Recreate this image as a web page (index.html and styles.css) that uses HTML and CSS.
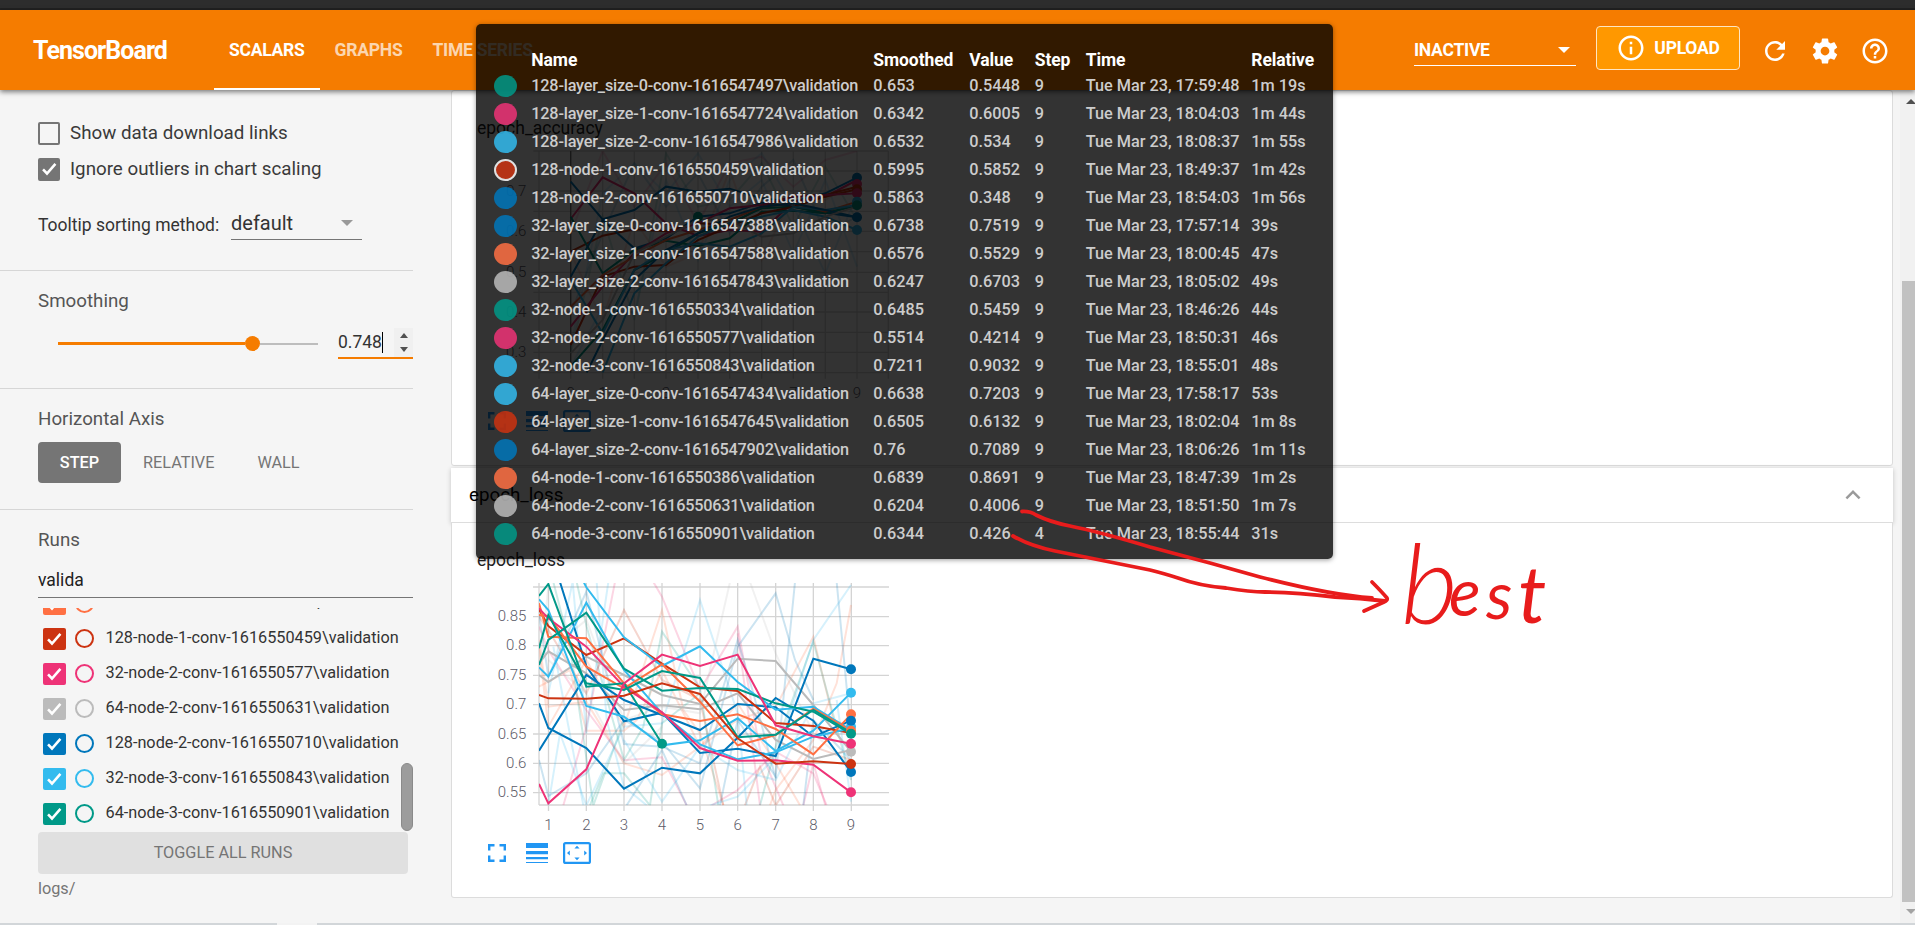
FILE: index.html
```html
<!DOCTYPE html>
<html lang="en">
<head>
<meta charset="utf-8">
<title>TensorBoard</title>
<link rel="stylesheet" href="styles.css">
</head>
<body>
<svg class="defs" width="0" height="0">
  <defs>
    <symbol id="check" viewBox="0 0 24 24"><path d="M5.5 12.5l4.3 4.4L19 6.5" fill="none" stroke="#fff" stroke-width="2.8"/></symbol>
    <symbol id="full" viewBox="0 0 18 18"><path d="M1.2 6.5V1.2H6.5M11.5 1.2h5.3v5.3M16.8 11.5v5.3h-5.3M6.5 16.8H1.2v-5.3" fill="none" stroke="currentColor" stroke-width="2.4"/></symbol>
    <symbol id="lines" viewBox="0 0 22 20"><path d="M0 0h22v5H0zM0 8h22v3.3H0zM0 14h22v2.2H0zM0 19h22v1H0z" fill="currentColor"/></symbol>
    <symbol id="fit" viewBox="0 0 28 22"><rect x="1.1" y="1.1" width="25.8" height="19.8" rx="1.5" fill="none" stroke="currentColor" stroke-width="2.2"/><path d="M14 3.8l2.6 2.8h-5.2zM14 18.2l2.6-2.8h-5.2zM4 11l2.8-2.6v5.2zM24 11l-2.8-2.6v5.2z" fill="currentColor"/></symbol>
  </defs>
</svg>
<div class="app">
  <div class="window-edge"></div>
  <header class="toolbar">
    <h1 class="brand">TensorBoard</h1>
    <nav class="tabs">
      <span class="tab tab-active">SCALARS</span>
      <span class="tab">GRAPHS</span>
      <span class="tab tab-time">TIME SERIES</span>
    </nav>
    <div class="inactive"><span>INACTIVE</span><i class="caret caret-white"></i></div>
    <div class="upload">
      <svg width="30" height="30" viewBox="0 0 24 24" fill="#fff"><path d="M11 17h2v-6h-2v6zm1-15C6.48 2 2 6.48 2 12s4.480 10 10 10 10-4.480 10-10S17.520 2 12 2zm0 18c-4.410 0-8-3.590-8-8s3.590-8 8-8 8 3.590 8 8-3.590 8-8 8zM11 9h2V7h-2v2z"/></svg>
      <span>UPLOAD</span>
    </div>
    <div class="actions">
      <svg width="30" height="30" viewBox="0 0 24 24" fill="#fff"><path d="M17.650 6.350C16.200 4.900 14.210 4 12 4c-4.420 0-7.990 3.580-7.990 8s3.570 8 7.990 8c3.730 0 6.840-2.550 7.730-6h-2.080c-.82 2.330-3.040 4-5.650 4-3.310 0-6-2.690-6-6s2.690-6 6-6c1.660 0 3.140.69 4.220 1.780L13 11h7V4l-2.350 2.350z"/></svg>
      <svg width="30" height="30" viewBox="0 0 24 24" fill="#fff"><path d="M19.430 12.980c.04-.32.07-.64.07-.98s-.03-.66-.07-.98l2.110-1.650c.19-.15.24-.42.12-.64l-2-3.460c-.12-.22-.39-.3-.61-.22l-2.490 1c-.52-.4-1.080-.73-1.690-.98l-.38-2.650C14.460 2.180 14.250 2 14 2h-4c-.25 0-.46.18-.49.42l-.38 2.650c-.61.25-1.170.59-1.690.98l-2.490-1c-.23-.09-.49 0-.61.22l-2 3.460c-.13.22-.07.49.12.64l2.110 1.650c-.04.32-.07.65-.07.98s.03.66.07.98l-2.110 1.650c-.19.15-.24.42-.12.64l2 3.460c.12.22.39.3.61.22l2.490-1c.52.4 1.080.73 1.690.98l.38 2.650c.03.24.24.42.49.42h4c.25 0 .46-.18.49-.42l.38-2.650c.61-.25 1.170-.59 1.690-.98l2.490 1c.23.09.49 0 .61-.22l2-3.460c.12-.22.07-.49-.12-.64l-2.110-1.650zM12 15.500c-1.930 0-3.500-1.570-3.500-3.500s1.570-3.500 3.500-3.500 3.500 1.570 3.500 3.500-1.570 3.500-3.500 3.500z"/></svg>
      <svg width="30" height="30" viewBox="0 0 24 24" fill="#fff"><path d="M11 18h2v-2h-2v2zm1-16C6.480 2 2 6.480 2 12s4.480 10 10 10 10-4.480 10-10S17.520 2 12 2zm0 18c-4.410 0-8-3.590-8-8s3.590-8 8-8 8 3.590 8 8-3.590 8-8 8zm0-14c-2.210 0-4 1.790-4 4h2c0-1.100.9-2 2-2s2 .9 2 2c0 2-3 1.750-3 5h2c0-2.250 3-2.500 3-5 0-2.210-1.790-4-4-4z"/></svg>
    </div>
  </header>

  <div class="content">
    <aside class="sidebar">
      <section class="group group-options">
        <label class="option"><i class="box"></i><span>Show data download links</span></label>
        <label class="option"><i class="box box-on"><svg width="22" height="22"><use href="#check"/></svg></i><span>Ignore outliers in chart scaling</span></label>
        <div class="sorting"><span class="sorting-label">Tooltip sorting method:</span><span class="select"><span>default</span><i class="caret"></i></span></div>
      </section>
      <section class="group group-smoothing">
        <h3 class="heading">Smoothing</h3>
        <div class="smoothing">
          <div class="slider"><i class="slider-fill"></i><i class="knob"></i><i class="slider-rest"></i></div>
          <div class="number"><span>0.748</span><i class="cursor"></i><span class="spin"><i class="up"></i><i class="down"></i></span></div>
        </div>
      </section>
      <section class="group group-axis">
        <h3 class="heading">Horizontal Axis</h3>
        <div class="axis"><span class="axis-on">STEP</span><span>RELATIVE</span><span>WALL</span></div>
      </section>
      <section class="group-runs">
        <h3 class="heading">Runs</h3>
        <div class="filter">valida</div>
        <div class="runs">
          <div class="run-list">
            <div class="run orange"><i><svg width="22" height="22"><use href="#check"/></svg></i><b></b><span>64-node-1-conv-1616550386\validation</span></div>
            <div class="run red"><i><svg width="22" height="22"><use href="#check"/></svg></i><b></b><span>128-node-1-conv-1616550459\validation</span></div>
            <div class="run pink"><i><svg width="22" height="22"><use href="#check"/></svg></i><b></b><span>32-node-2-conv-1616550577\validation</span></div>
            <div class="run grey"><i><svg width="22" height="22"><use href="#check"/></svg></i><b></b><span>64-node-2-conv-1616550631\validation</span></div>
            <div class="run blue"><i><svg width="22" height="22"><use href="#check"/></svg></i><b></b><span>128-node-2-conv-1616550710\validation</span></div>
            <div class="run cyan"><i><svg width="22" height="22"><use href="#check"/></svg></i><b></b><span>32-node-3-conv-1616550843\validation</span></div>
            <div class="run teal"><i><svg width="22" height="22"><use href="#check"/></svg></i><b></b><span>64-node-3-conv-1616550901\validation</span></div>
          </div>
          <i class="thumb"></i>
        </div>
        <div class="toggle">TOGGLE ALL RUNS</div>
        <div class="logdir">logs/</div>
      </section>
    </aside>

    <main class="panes">
      <section class="pane pane-accuracy">
        <h2 class="chart-title">epoch_accuracy</h2>
        <svg class="chart" width="440" height="255" viewBox="0 390 1320 765">
          <clipPath id="c1"><rect x="207" y="393" width="1050" height="665"/></clipPath>
          <path class="grid" d="M207 393V1076M302 393V1076M398 393V1076M493 393V1076M588 393V1076M684 393V1076M779 393V1076M875 393V1076M970 393V1076M1066 393V1076M1161 393V1076M1255 393V1076M190 393H1255M190 453H1255M190 513H1255M190 574H1255M190 634H1255M190 695H1255M190 757H1255M190 817H1255M190 876H1255M190 937H1255M190 997H1255M190 1058H1255"/>
          <path d="M302 393V1058" stroke="#777" stroke-width="4"/>
          <g class="faint" clip-path="url(#c1)">
            <polyline class="s-pink" points="302,640 398,393 493,560 588,430 684,610 779,430 875,410 970,500 1066,420 1161,393"/>
            <polyline class="s-cyan" points="302,980 398,520 493,430 588,520 684,400 779,560 875,480 970,700 1066,480 1161,740"/>
            <polyline class="s-blue" points="302,880 398,640 493,430 588,560 684,460 779,640 875,500 970,420 1066,640 1161,590"/>
            <polyline class="s-teal" points="302,1000 398,590 493,900 588,400 684,560 779,540 875,430 970,620 1066,440 1161,600"/>
            <polyline class="s-orange" points="302,700 398,900 493,600 588,740 684,700 779,450 875,720 970,520 1066,540 1161,480"/>
            <polyline class="s-cyan" points="302,1040 398,860 493,880 588,480 684,720 779,480 875,400 970,560 1066,760 1161,520"/>
          </g>
          <g class="lines" clip-path="url(#c1)">
            <polyline class="s-blue" points="302,485 398,598 493,570 588,500 684,515 779,506 875,535 970,545 1066,520 1161,473"/>
            <polyline class="s-pink" points="302,597 398,472 493,520 588,610 684,648 779,630 875,635 970,545 1066,530 1161,480"/>
            <polyline class="s-red" points="302,695 398,647 493,628 588,634 684,610 779,615 875,560 970,528 1066,525 1161,500"/>
            <polyline class="s-teal" points="302,590 398,760 493,690 588,662 684,678 779,655 875,575 970,572 1066,580 1161,556"/>
            <polyline class="s-blue" points="302,770 398,600 493,685 588,655 684,590 779,580 875,548 970,560 1066,578 1161,592"/>
            <polyline class="s-teal" points="302,1040 398,930 493,750 588,700 684,640 779,610 875,565 970,560 1066,580 1161,556"/>
            <polyline class="s-red" points="302,975 398,770 493,740 588,735 684,660 779,620 875,580 970,560 1066,530 1161,508"/>
            <polyline class="s-pink" points="302,920 398,800 493,700 588,640 684,610 779,565 875,555 970,530 1066,525 1161,520"/>
            <polyline class="s-orange" points="302,860 398,765 493,710 588,660 684,630 779,600 875,560 970,550 1066,575 1161,545"/>
            <polyline class="s-cyan" points="302,780 398,940 493,750 588,690 684,670 779,680 875,640 970,560 1066,570 1161,555"/>
            <polyline class="s-blue" points="350,1058 398,960 493,780 588,690 684,640 779,590 875,560 970,550 1066,570 1161,592"/>
            <polyline class="s-cyan" points="398,1058 493,820 588,730 684,650 779,610 875,590 970,570 1066,590 1161,630"/>
            <polyline class="s-grey" points="302,1000 398,900 493,700 588,650 684,600 779,600 875,650 970,640 1066,590 1161,560"/>
          </g>
          <g><circle class="d-blue" cx="1161" cy="473" r="15"/><circle class="d-pink" cx="1161" cy="492" r="15"/><circle class="d-red" cx="1161" cy="508" r="15"/><circle class="d-pink" cx="1161" cy="520" r="15"/><circle class="d-cyan" cx="1161" cy="545" r="15"/><circle class="d-teal" cx="1161" cy="556" r="15"/><circle class="d-blue" cx="1161" cy="592" r="15"/><circle class="d-cyan" cx="1161" cy="630" r="15"/><circle class="d-teal" cx="684" cy="590" r="15"/></g>
          <g class="ticks-y"><text x="169" y="528">0.7</text><text x="169" y="649">0.6</text><text x="169" y="772">0.5</text><text x="169" y="891">0.4</text><text x="169" y="1012">0.3</text></g>
          <g class="ticks-x"><text x="302" y="1134">0</text><text x="398" y="1134">1</text><text x="493" y="1134">2</text><text x="588" y="1134">3</text><text x="684" y="1134">4</text><text x="779" y="1134">5</text><text x="875" y="1134">6</text><text x="970" y="1134">7</text><text x="1066" y="1134">8</text><text x="1161" y="1134">9</text></g>
        </svg>
        <div class="chart-tools"><svg width="18" height="18"><use href="#full"/></svg><svg width="22" height="20"><use href="#lines"/></svg><svg width="28" height="22"><use href="#fit"/></svg></div>
      </section>

      <header class="pane-header"><span>epoch_loss</span><svg width="30" height="30" viewBox="0 0 24 24" fill="#9a9a9a"><path d="M12 8l-6 6 1.410 1.410L12 10.830l4.590 4.580L18 14z"/></svg></header>
      <section class="pane pane-loss">
        <h2 class="chart-title">epoch_loss</h2>
        <svg class="chart" width="440" height="255" viewBox="0 66 1320 765">
          <clipPath id="c2"><rect x="207" y="69" width="1050" height="667"/></clipPath>
          <path class="grid" d="M207 69V735M235.500 69V753M349 69V753M462 69V753M576 69V753M690 69V753M803 69V753M917 69V753M1030 69V753M1144 69V753M189 81H1257M189 170H1257M189 257H1257M189 346H1257M189 434H1257M189 522H1257M189 610H1257M189 698H1257M207 735H1257"/>
          <g class="faint" clip-path="url(#c2)">
            <polyline class="s-pink" points="280,736 349,500 435,66"/>
            <polyline class="s-pink" points="550,66 576,110 690,390 803,200 870,570 940,736"/>
            <polyline class="s-pink" points="207,200 235,270 349,450 462,601 576,592 650,736"/>
            <polyline class="s-pink" points="725,736 803,690 917,575 1030,640 1070,736"/>
            <polyline class="s-pink" points="803,220 840,500 870,736"/>
            <polyline class="s-pink" points="1000,736 1030,610 1066,736"/>
            <polyline class="s-orange" points="207,240 235,440 349,425 462,610 576,645 690,560 803,480 917,440 1030,230 1090,480 1143,500"/>
            <polyline class="s-orange" points="207,260 235,500 349,300 462,500 576,150 640,450 690,520 760,736"/>
            <polyline class="s-orange" points="207,380 300,330 349,512 462,512 500,480 576,330 690,560 803,430 917,610 990,736"/>
            <polyline class="s-orange" points="900,736 917,690 1030,540 1100,370 1143,135"/>
            <polyline class="s-red" points="207,170 235,210 349,400 462,150 576,360 690,420 760,736"/>
            <polyline class="s-red" points="825,736 870,620 917,736 1030,560 1143,600"/>
            <polyline class="s-teal" points="250,66 300,260 370,736 462,480"/>
            <polyline class="s-teal" points="320,66 350,200 462,600 520,500 576,215 690,385 745,736"/>
            <polyline class="s-teal" points="870,736 917,560 1030,245 1143,660"/>
            <polyline class="s-teal" points="360,736 400,640 462,640 540,736 576,490 690,400"/>
            <polyline class="s-cyan" points="235,736 270,520 349,736 462,500 576,490 690,120 803,460 830,736"/>
            <polyline class="s-cyan" points="235,400 308,66 349,520 415,66"/>
            <polyline class="s-cyan" points="250,260 340,736"/><polyline class="s-cyan" points="380,66 410,480 462,680 530,736"/>
            <polyline class="s-cyan" points="720,736 803,710 917,590 1030,240 1143,75"/>
            <polyline class="s-cyan" points="462,540 576,725 690,560 803,630 917,660 1030,430 1143,400"/>
            <polyline class="s-cyan" points="1100,420 1143,725"/>
            <polyline class="s-blue" points="207,600 235,708 349,640 462,480 576,545 690,685 803,260 917,100 975,300 1030,420"/>
            <polyline class="s-blue" points="207,160 235,350 349,95 462,552 576,560 690,610 803,240 850,400 917,655"/>
            <polyline class="s-blue" points="470,736 576,570 650,736"/><polyline class="s-blue" points="750,736 803,480 917,650 975,66"/>
            <polyline class="s-blue" points="1100,66 1143,520"/><polyline class="s-blue" points="1000,736 1030,480 1143,600"/>
            <polyline class="s-grey" points="207,350 235,80 300,220 349,180 462,480 576,440 690,460 780,66"/>
            <polyline class="s-grey" points="840,66 917,280 1030,520 1143,620"/><polyline class="s-grey" points="235,300 349,400 462,610 576,500"/>
          </g>
          <g class="lines" clip-path="url(#c2)">
            <polyline class="s-grey" points="207,345 235,366 349,290 462,345 576,405 690,432 803,296 917,303 1030,435 1143,575"/>
            <polyline class="s-grey" points="207,310 235,274 349,340 462,450 576,436 690,448 803,400 917,540 1030,597 1143,570"/>
            <polyline class="s-blue" points="207,430 235,504 349,564 462,686 576,623 690,640 803,533 917,414 1030,482 1143,636"/>
            <polyline class="s-blue" points="207,572 349,345 462,420 576,465 690,510 803,432 917,442 1030,530 1143,482"/>
            <polyline class="s-blue" points="268,60 349,318 462,484 576,458 690,579 803,566 917,588 1030,296 1143,328"/>
            <polyline class="s-red" points="207,148 235,198 349,285 462,235 576,311 690,382 803,393 917,489 1030,498 1143,519"/>
            <polyline class="s-cyan" points="207,118 235,150 349,438 462,470 576,556 690,541 803,475 917,573 1030,512 1143,398"/>
            <polyline class="s-cyan" points="207,322 235,350 349,128 462,330 576,460 690,553 803,598 917,577 1030,530 1143,505"/>
            <polyline class="s-cyan" points="338,60 349,82 462,232 576,318 690,259 803,366 917,449 1030,440 1143,510"/>
            <polyline class="s-orange" points="207,130 235,230 349,235 462,370 576,463 690,483 803,463 917,507 1030,583 1143,463"/>
            <polyline class="s-orange" points="207,165 235,168 349,320 462,385 576,313 690,425 803,556 917,525 1030,446 1143,512"/>
            <polyline class="s-pink" points="207,145 235,175 349,260 462,380 576,457 690,564 803,602 917,601 1030,614 1143,697"/>
            <polyline class="s-teal" points="207,108 235,72 349,380 462,370 576,551"/>
            <polyline class="s-teal" points="207,315 235,240 349,158 462,326 576,392 690,384 803,387 917,430 1030,455 1143,522"/>
            <polyline class="s-teal" points="207,265 235,165 349,370 462,390 576,333 690,354 803,532 917,524 1030,450 1143,518"/>
            <polyline class="s-red" points="207,405 235,415 349,416 462,407 576,370 690,402 803,535 917,611 1030,604 1143,612"/>
            <polyline class="s-pink" points="207,672 235,730 349,628 462,370 576,284 690,318 803,284 917,496 1030,529 1143,551"/>
          </g>
          <g><circle class="d-blue" cx="1143" cy="328" r="15"/><circle class="d-cyan" cx="1143" cy="398" r="15"/><circle class="d-orange" cx="1143" cy="463" r="15"/><circle class="d-cyan" cx="1143" cy="500" r="15"/><circle class="d-blue" cx="1143" cy="482" r="15"/><circle class="d-orange" cx="1143" cy="512" r="15"/><circle class="d-teal" cx="1143" cy="521" r="15"/><circle class="d-grey" cx="1143" cy="575" r="15"/><circle class="d-pink" cx="1143" cy="551" r="15"/><circle class="d-blue" cx="1143" cy="636" r="15"/><circle class="d-red" cx="1143" cy="612" r="15"/><circle class="d-pink" cx="1143" cy="697" r="15"/><circle class="d-teal" cx="576" cy="551" r="15"/></g>
          <g class="ticks-y"><text x="169" y="183">0.85</text><text x="169" y="271">0.8</text><text x="169" y="359">0.75</text><text x="169" y="447">0.7</text><text x="169" y="536">0.65</text><text x="169" y="624">0.6</text><text x="169" y="711">0.55</text></g>
          <g class="ticks-x"><text x="235" y="810">1</text><text x="349" y="810">2</text><text x="462" y="810">3</text><text x="576" y="810">4</text><text x="690" y="810">5</text><text x="803" y="810">6</text><text x="917" y="810">7</text><text x="1030" y="810">8</text><text x="1143" y="810">9</text></g>
        </svg>
        <div class="chart-tools"><svg width="18" height="18"><use href="#full"/></svg><svg width="22" height="20"><use href="#lines"/></svg><svg width="28" height="22"><use href="#fit"/></svg></div>
      </section>
    </main>
    <div class="scrollbar"><i class="sb-up"></i><i class="sb-thumb"></i><i class="sb-down"></i></div>
  </div>
  <div class="bottom-edge"><i></i></div>

  <div class="tooltip">
    <table>
      <colgroup><col class="c-swatch"><col class="c-name"><col class="c-smooth"><col class="c-value"><col class="c-step"><col class="c-time"><col class="c-rel"></colgroup>
      <tr><th></th><th>Name</th><th>Smoothed</th><th>Value</th><th>Step</th><th>Time</th><th>Relative</th></tr>
      <tr><td><i class="teal"></i></td><td>128-layer_size-0-conv-1616547497\validation</td><td>0.653</td><td>0.5448</td><td>9</td><td>Tue Mar 23, 17:59:48</td><td>1m 19s</td></tr>
      <tr><td><i class="pink"></i></td><td>128-layer_size-1-conv-1616547724\validation</td><td>0.6342</td><td>0.6005</td><td>9</td><td>Tue Mar 23, 18:04:03</td><td>1m 44s</td></tr>
      <tr><td><i class="cyan"></i></td><td>128-layer_size-2-conv-1616547986\validation</td><td>0.6532</td><td>0.534</td><td>9</td><td>Tue Mar 23, 18:08:37</td><td>1m 55s</td></tr>
      <tr><td><i class="red closest"></i></td><td>128-node-1-conv-1616550459\validation</td><td>0.5995</td><td>0.5852</td><td>9</td><td>Tue Mar 23, 18:49:37</td><td>1m 42s</td></tr>
      <tr><td><i class="blue"></i></td><td>128-node-2-conv-1616550710\validation</td><td>0.5863</td><td>0.348</td><td>9</td><td>Tue Mar 23, 18:54:03</td><td>1m 56s</td></tr>
      <tr><td><i class="blue"></i></td><td>32-layer_size-0-conv-1616547388\validation</td><td>0.6738</td><td>0.7519</td><td>9</td><td>Tue Mar 23, 17:57:14</td><td>39s</td></tr>
      <tr><td><i class="orange"></i></td><td>32-layer_size-1-conv-1616547588\validation</td><td>0.6576</td><td>0.5529</td><td>9</td><td>Tue Mar 23, 18:00:45</td><td>47s</td></tr>
      <tr><td><i class="grey"></i></td><td>32-layer_size-2-conv-1616547843\validation</td><td>0.6247</td><td>0.6703</td><td>9</td><td>Tue Mar 23, 18:05:02</td><td>49s</td></tr>
      <tr><td><i class="teal"></i></td><td>32-node-1-conv-1616550334\validation</td><td>0.6485</td><td>0.5459</td><td>9</td><td>Tue Mar 23, 18:46:26</td><td>44s</td></tr>
      <tr><td><i class="pink"></i></td><td>32-node-2-conv-1616550577\validation</td><td>0.5514</td><td>0.4214</td><td>9</td><td>Tue Mar 23, 18:50:31</td><td>46s</td></tr>
      <tr><td><i class="cyan"></i></td><td>32-node-3-conv-1616550843\validation</td><td>0.7211</td><td>0.9032</td><td>9</td><td>Tue Mar 23, 18:55:01</td><td>48s</td></tr>
      <tr><td><i class="cyan"></i></td><td>64-layer_size-0-conv-1616547434\validation</td><td>0.6638</td><td>0.7203</td><td>9</td><td>Tue Mar 23, 17:58:17</td><td>53s</td></tr>
      <tr><td><i class="red"></i></td><td>64-layer_size-1-conv-1616547645\validation</td><td>0.6505</td><td>0.6132</td><td>9</td><td>Tue Mar 23, 18:02:04</td><td>1m 8s</td></tr>
      <tr><td><i class="blue"></i></td><td>64-layer_size-2-conv-1616547902\validation</td><td>0.76</td><td>0.7089</td><td>9</td><td>Tue Mar 23, 18:06:26</td><td>1m 11s</td></tr>
      <tr><td><i class="orange"></i></td><td>64-node-1-conv-1616550386\validation</td><td>0.6839</td><td>0.8691</td><td>9</td><td>Tue Mar 23, 18:47:39</td><td>1m 2s</td></tr>
      <tr><td><i class="grey"></i></td><td>64-node-2-conv-1616550631\validation</td><td>0.6204</td><td>0.4006</td><td>9</td><td>Tue Mar 23, 18:51:50</td><td>1m 7s</td></tr>
      <tr><td><i class="teal"></i></td><td>64-node-3-conv-1616550901\validation</td><td>0.6344</td><td>0.426</td><td>4</td><td>Tue Mar 23, 18:55:44</td><td>31s</td></tr>
    </table>
  </div>

  <svg class="annotation" width="640" height="200" viewBox="0 0 640 200">
    <g fill="none" stroke="#e81c1c" stroke-width="3.8" stroke-linecap="round" stroke-linejoin="round">
      <path d="M62 51.500Q70 51 76 55Q90 62 110 66Q140 72 190 87L250 103L300 117Q370 135 412 138"/>
      <path d="M53 76Q70 86 95 91L190 110Q206 114 218 118Q240 126 266 128Q290 132 305 132Q335 132 375 137Q400 138 425 141"/>
      <path d="M412 122Q421 131 427 138Q428 140 424 142L404 151"/>
    </g>
    <text class="ink"><tspan class="ink-b" x="441" y="164">b</tspan><tspan class="ink-e" x="489" y="156">e</tspan><tspan class="ink-s" x="526" y="159">s</tspan><tspan class="ink-t" x="558" y="163">t</tspan></text>
  </svg>
</div>
</body>
</html>
```

FILE: styles.css
```css
* { box-sizing: border-box; }
body { margin: 0; font-family: Roboto, "Liberation Sans", sans-serif; font-size: 17.5px; color: #333; background: #f5f5f5; }
h1, h2, h3 { margin: 0; font-weight: 400; }
i { display: block; font-style: normal; }
svg { display: block; flex: none; }
.defs { position: absolute; }
.app { position: relative; width: 1915px; height: 925px; overflow: hidden; display: flex; flex-direction: column; }
.window-edge { height: 10px; flex: none; background: #2d2d2d; border-bottom: 2px solid #212121; }

/* run colours */
.teal { --c: #009988; } .pink { --c: #ee3377; } .cyan { --c: #33bbee; } .red { --c: #cc3311; }
.blue { --c: #0077bb; } .orange { --c: #ff7043; } .grey { --c: #bbbbbb; }

/* toolbar */
.toolbar { position: relative; z-index: 2; height: 80px; flex: none; display: flex; align-items: center; background: #f57c00; color: #fff; font-weight: 700; letter-spacing: -0.25px; box-shadow: 0 2px 5px rgba(0,0,0,.5); padding-right: 25px; }
.brand { width: 181px; margin-left: 33px; font-size: 25px; font-weight: 700; letter-spacing: -0.95px; }
.tabs { display: flex; height: 80px; }
.tab { padding: 0 15px; line-height: 80px; color: rgba(255,255,255,.7); white-space: nowrap; }
.tab-active { color: #fff; border-bottom: 2px solid #fff; }
.inactive { margin-left: auto; width: 162px; height: 32px; display: flex; justify-content: space-between; align-items: center; border-bottom: 1px solid #fff; padding-right: 6px; }
.caret { border: 6px solid transparent; border-top-color: #999; border-bottom: 0; }
.caret-white { border-top-color: #fff; }
.upload { width: 144px; height: 44px; margin: -4px 20px 0; display: flex; align-items: center; justify-content: center; gap: 8px; background: #ff9800; border: 1px solid #ffe5c2; border-radius: 4px; }
.actions { display: flex; gap: 20px; margin-top: 2px; }

.content { display: flex; height: 833px; flex: none; }

/* sidebar */
.sidebar { width: 413px; flex: none; }
.group { border-bottom: 1px solid #d6d6d6; padding-left: 38px; }
.group-options { height: 181px; padding-top: 25px; }
.group-smoothing { height: 118px; padding-top: 18px; }
.group-axis { height: 121px; padding-top: 18px; }
.group-runs { padding: 18px 0 0 38px; }
.option { display: flex; align-items: center; gap: 10px; height: 36px; font-size: 18.75px; color: #3a3a3a; }
.box { width: 22px; height: 23px; border: 2px solid #757575; border-radius: 2px; }
.box-on { background: #757575; }
.box svg { margin: -2px; }
.sorting { display: flex; align-items: center; margin-top: 14px; height: 44px; }
.sorting-label { width: 193px; white-space: nowrap; padding-top: 3px; }
.select { width: 131px; height: 33px; border-bottom: 1px solid #757575; display: flex; justify-content: space-between; align-items: center; padding-right: 9px; font-size: 20px; }
.heading { font-size: 18.75px; line-height: 24px; color: #555; }
.smoothing { display: flex; justify-content: space-between; padding-left: 20px; margin-top: 14px; height: 32px; }
.slider { width: 260px; display: flex; align-items: center; height: 33px; }
.slider-fill { width: 187px; height: 3px; background: #f57c00; }
.knob { width: 15px; height: 15px; border-radius: 50%; background: #f57c00; }
.slider-rest { flex: 1; height: 2px; background: #bdbdbd; }
.number { width: 75px; display: flex; align-items: center; border-bottom: 2px solid #f57c00; font-size: 17.5px; color: #333; }
.cursor { width: 1px; height: 21px; background: #000; }
.spin { margin-left: auto; width: 19px; height: 29px; background: #f0f0f0; display: flex; flex-direction: column; justify-content: space-between; align-items: center; padding: 5px 0; }
.up { border: 4.5px solid transparent; border-bottom: 5px solid #505050; border-top: 0; }
.down { border: 4.5px solid transparent; border-top: 5px solid #505050; border-bottom: 0; }
.axis { display: flex; align-items: center; height: 41px; margin-top: 11px; font-size: 16.25px; color: #757575; gap: 43px; }
.axis-on { width: 83px; line-height: 41px; text-align: center; background: #757575; color: #fff; font-weight: 500; border-radius: 4px; margin-right: -21px; }
.filter { height: 30px; margin-top: 16px; padding-top: 2px; font-size: 17.5px; border-bottom: 1px solid #757575; color: #212121; }
.runs { display: flex; justify-content: space-between; align-items: flex-end; height: 223px; margin-top: 10px; overflow: hidden; }
.run-list { padding-left: 5px; align-self: flex-end; }
.run { display: flex; align-items: center; height: 35px; font-size: 16.25px; color: #333; white-space: nowrap; }
.run span { padding-bottom: 2px; }
.run i { width: 23px; height: 22px; border-radius: 2px; background: var(--c); }
.run b { width: 19px; height: 19px; border: 2px solid var(--c); border-radius: 50%; margin: 0 11.5px 0 9px; }
.thumb { width: 12px; height: 68px; border-radius: 6px; background: #9c9c9c; border: 1px solid #8a8a8a; }
.toggle { width: 370px; height: 42px; line-height: 42px; margin-top: 1px; text-align: center; background: #e0e0e0; color: #757575; border-radius: 4px; font-size: 16.25px; }
.logdir { margin-top: 3px; line-height: 24px; font-size: 16.25px; color: #757575; }

/* panes */
.panes { width: 1442px; margin-left: 38px; flex: none; }
.pane { background: #fff; border: 1px solid #dcdcdc; border-radius: 3px; padding-left: 18px; }
.pane-accuracy { height: 376px; padding-top: 26px; }
.pane-loss { height: 375px; border-top: 0; padding-top: 26px; border-radius: 0 0 3px 3px; }
.pane-header { height: 55px; margin-top: 2px; padding: 0 25px 0 18px; display: flex; align-items: center; justify-content: space-between; background: #fff; color: #000; font-size: 18.75px; border-bottom: 1px solid #ddd; box-shadow: 0 1px 5px rgba(0,0,0,.2); }
.chart-title { padding-left: 7px; font-size: 17.5px; line-height: 22px; color: #222; }
.chart { margin-top: 11px; font-family: Roboto, "Liberation Sans", sans-serif; }
.chart-tools { display: flex; align-items: center; height: 30px; margin-top: 1px; padding-left: 18px; gap: 20px; color: #2196f3; }
.chart-tools svg:last-child { margin-left: -5px; }
.grid { stroke: #000; stroke-opacity: .17; stroke-width: 4; fill: none; }
.lines polyline { fill: none; stroke-width: 6; }
.faint polyline { fill: none; stroke-width: 6; opacity: .2; }
.s-teal { stroke: #009988; } .s-pink { stroke: #ee3377; } .s-cyan { stroke: #33bbee; } .s-red { stroke: #cc3311; }
.s-blue { stroke: #0077bb; } .s-orange { stroke: #ff7043; } .s-grey { stroke: #bbb; }
.d-teal { fill: #009988; } .d-pink { fill: #ee3377; } .d-cyan { fill: #33bbee; } .d-red { fill: #cc3311; }
.d-blue { fill: #0077bb; } .d-orange { fill: #ff7043; } .d-grey { fill: #bbb; }
.ticks-y, .ticks-x { font-size: 45px; font-weight: 300; fill: #5c5b68; }
.ticks-y { text-anchor: end; }
.ticks-x { text-anchor: middle; }

/* page scrollbar */
.scrollbar { width: 15px; margin-left: auto; background: #f1f1f1; padding: 9px 0 9px 2px; display: flex; flex-direction: column; }
.sb-up { width: 0; margin-left: 4px; border: 5px solid transparent; border-bottom-color: #505050; border-top: 0; }
.sb-thumb { margin-top: 177px; height: 622px; background: #c1c1c1; }
.sb-down { width: 0; margin: 7px 0 0 4px; border: 5px solid transparent; border-top-color: #a3a3a3; border-bottom: 0; }
.bottom-edge { height: 2px; background: #d2d6d9; flex: none; }
.bottom-edge i { width: 40px; height: 2px; margin-left: 277px; background: #f3f3f3; }

/* tooltip over the charts */
.tooltip { position: absolute; z-index: 3; left: 476px; top: 24px; width: 857px; height: 535px; padding: 24px 0 0 18px; background: rgba(0,0,0,.8); border-radius: 5px; box-shadow: 0 1px 5px rgba(0,0,0,.4); }
.tooltip table { width: 832px; table-layout: fixed; border-collapse: collapse; white-space: nowrap; }
.tooltip th { height: 23px; padding: 0; text-align: left; font-size: 17.5px; line-height: 20px; font-weight: 700; color: #fff; letter-spacing: -0.08px; }
.tooltip td { height: 28px; padding: 1px 0 0; font-size: 16.25px; line-height: 20px; font-weight: 500; color: #ccc; }
.tooltip td:nth-child(2) { letter-spacing: -0.2px; }
.tooltip td i { width: 23px; height: 22px; border-radius: 50%; background: var(--c); opacity: .85; }
.tooltip td .closest { border: 2px solid #fff; }
.c-swatch { width: 37.300px; } .c-name { width: 342px; } .c-smooth { width: 96px; } .c-value { width: 65.400px; } .c-step { width: 51px; } .c-time { width: 165.600px; }

/* red pen annotation */
.annotation { position: absolute; z-index: 4; left: 960px; top: 460px; }
.ink { font-family: Lato, sans-serif; font-style: italic; fill: #e81c1c; }
.ink-b { font-size: 110px; font-weight: 300; }
.ink-e, .ink-s { font-size: 66px; font-weight: 400; }
.ink-t { font-size: 80px; font-weight: 400; }
```
